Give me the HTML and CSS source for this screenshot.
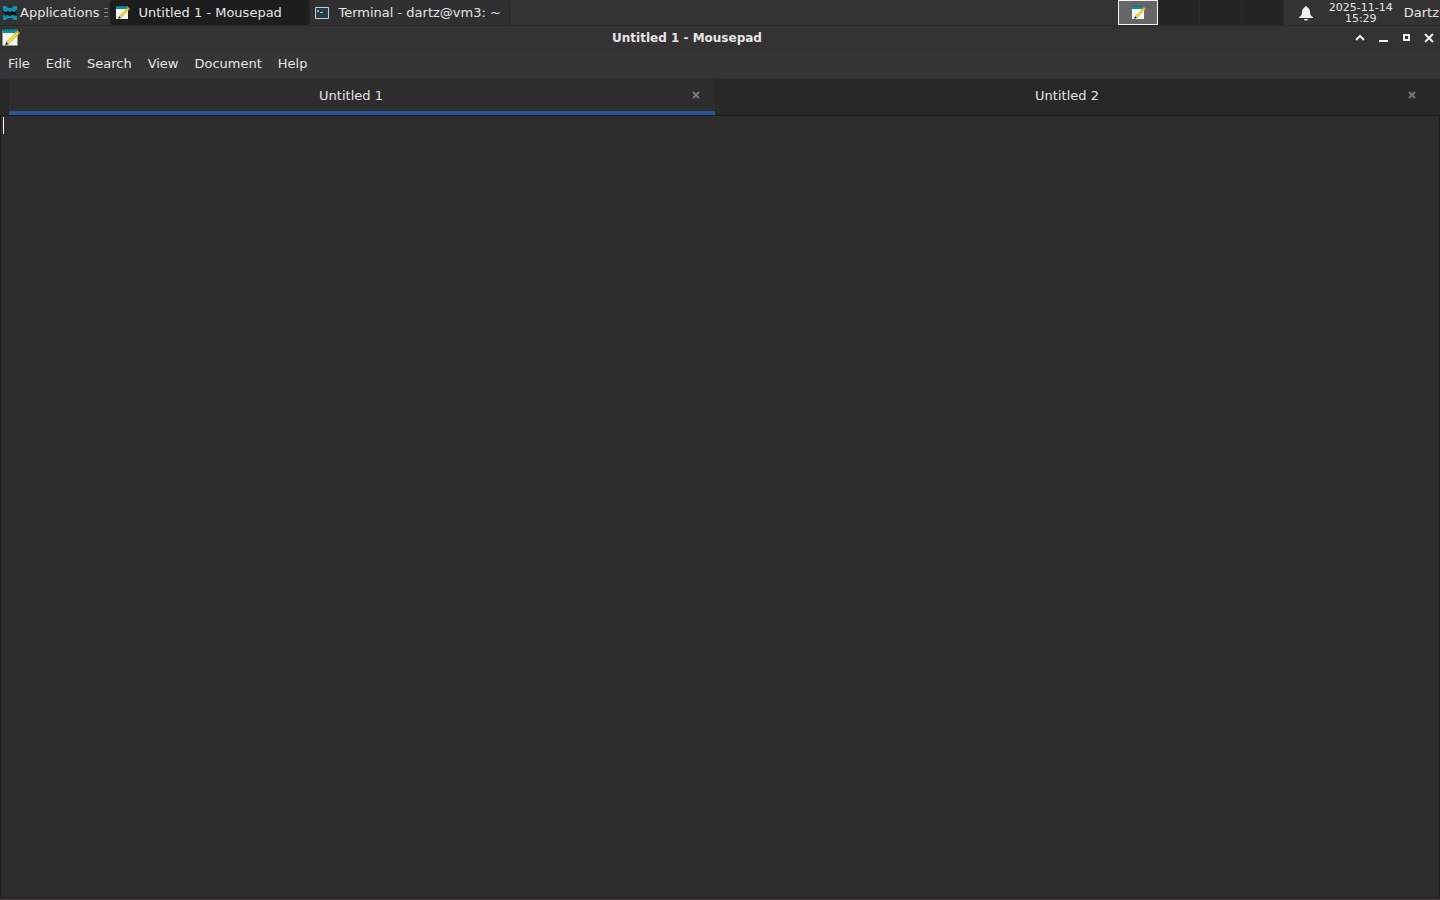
FILE: index.html
```html
<!DOCTYPE html>
<html lang="en">
    <head>
        <meta charset="utf-8">
        <title>Untitled 1 - Mousepad</title>
        <meta name="viewport" content="width=device-width, initial-scale=1">
        <link rel="stylesheet" href="styles.css">
    </head>

    <body>
        <!-- icon shared by the taskbar, pager and title bar -->
        <svg class="defs" width="0" height="0" aria-hidden="true">
            <symbol id="notepad" viewBox="0 0 16 16">
                <path d="M2 2h12v12H2z" fill="#f6f6f2"/>
                <path d="M2 1h12v3H2z" fill="#138c9c"/>
                <path d="M3 1v1M5 1v1M7 1v1M9 1v1M11 1v1" stroke="#0a5964"/>
                <path d="M5 11L13 3l2 2-8 8z" fill="#dfc52e"/>
                <path d="M6 12l8-8" stroke="#f3e36a"/>
                <path d="M5 11l2 2-3 1z" fill="#3a3524"/>
                <path d="M13 3l1-1 2 2-1 1z" fill="#d8a93a"/>
            </symbol>
        </svg>

        <header class="panel">
            <button class="apps">
                <svg width="18" height="18" viewBox="0 0 18 18" aria-hidden="true">
                    <path d="M2 2h3l2 2h4l2-2h3v4l-2 3 2 3v4h-3l-2-2H7l-2 2H2v-4l2-3-2-3z" fill="#1591ab"/>
                    <path d="M1 7l4 1 2-1 2 1 2-1 2 1 3-2-1 4 1 2-4-1-3 1-3-1-3 1 1-2z" fill="#0c171c"/>
                </svg>
                Applications
            </button>
            <span class="handle"></span>
            <button class="task active">
                <svg width="16" height="16" aria-hidden="true"><use href="#notepad"/></svg>
                Untitled 1 - Mousepad
            </button>
            <button class="task">
                <svg width="16" height="16" viewBox="0 0 16 16" aria-hidden="true">
                    <path d="M1.500 2.500h13v11h-13z" fill="#263a48" stroke="#c3d3dc"/>
                    <path d="M3 5l2 1-2 1M6 7.500h3" fill="none" stroke="#b5c6d0"/>
                </svg>
                Terminal - dartz@vm3: ~
            </button>

            <div class="pager">
                <button class="desk current" aria-label="Workspace 1">
                    <svg width="16" height="16" aria-hidden="true"><use href="#notepad"/></svg>
                </button>
                <button class="desk" aria-label="Workspace 2"></button>
                <button class="desk" aria-label="Workspace 3"></button>
                <button class="desk" aria-label="Workspace 4"></button>
            </div>
            <button class="bell" aria-label="Notifications">
                <svg width="16" height="16" viewBox="0 0 16 16" aria-hidden="true">
                    <path d="M8 1c1 0 1 1 1 1 2 1 3 3 3 5 0 3 1 4 3 5v1H1v-1c2-1 3-2 3-5 0-2 1-4 3-5 0 0 0-1 1-1zM6 14h4c0 2-4 2-4 0z" fill="#f0f0f0"/>
                </svg>
            </button>
            <button class="clock"><span>2025-11-14</span><span>15:29</span></button>
            <button class="user">Dartz</button>
        </header>

        <main class="window">
            <div class="titlebar">
                <svg width="20" height="20" aria-hidden="true"><use href="#notepad"/></svg>
                <h1>Untitled 1 - Mousepad</h1>
                <div class="controls">
                    <button aria-label="Shade"><svg width="12" height="12" viewBox="0 0 12 12"><path d="M2 8l4-4 4 4"/></svg></button>
                    <button aria-label="Minimize"><svg width="12" height="12" viewBox="0 0 12 12"><path d="M2 9h9"/></svg></button>
                    <button aria-label="Maximize"><svg width="12" height="12" viewBox="0 0 12 12"><path d="M4 3h5v5H4z"/></svg></button>
                    <button aria-label="Close"><svg width="12" height="12" viewBox="0 0 12 12"><path d="M2 2l8 8M10 2l-8 8"/></svg></button>
                </div>
            </div>

            <nav class="menubar">
                <button>File</button>
                <button>Edit</button>
                <button>Search</button>
                <button>View</button>
                <button>Document</button>
                <button>Help</button>
            </nav>

            <div class="tabs">
                <div class="tab active">
                    <button class="name">Untitled 1</button>
                    <button class="close" aria-label="Close Untitled 1"><svg width="10" height="10" viewBox="0 0 10 10"><path d="M2 2l6 6M8 2l-6 6"/></svg></button>
                </div>
                <div class="tab">
                    <button class="name">Untitled 2</button>
                    <button class="close" aria-label="Close Untitled 2"><svg width="10" height="10" viewBox="0 0 10 10"><path d="M2 2l6 6M8 2l-6 6"/></svg></button>
                </div>
            </div>

            <div class="editor">
                <textarea aria-label="Document text" spellcheck="false"></textarea>
                <span class="caret"></span>
            </div>
        </main>
    </body>
</html>
```
FILE: styles.css
```css
* {
    box-sizing: border-box;
}

body {
    margin: 0;
    height: 100vh;
    display: flex;
    flex-direction: column;
    background: #353333;
    color: #e6e6e6;
    font-family: "DejaVu Sans", Verdana, sans-serif;
    font-size: 13px;
    overflow: hidden;
}

button {
    margin: 0;
    padding: 0;
    border: 0;
    background: none;
    color: inherit;
    font: inherit;
    white-space: nowrap;
}

svg {
    display: block;
    flex: none;
}

.defs {
    position: absolute;
}

/* top panel */
.panel {
    display: flex;
    height: 26px;
    background: #333;
    border-bottom: 1px solid #292929;
}

.apps {
    display: flex;
    align-items: center;
    gap: 1px;
    padding-left: 1px;
}

.handle {
    width: 4px;
    height: 9px;
    margin: 8px 2px 0 5px;
    background: repeating-linear-gradient(#858585 0 1px, transparent 1px 4px);
}

.task {
    display: flex;
    align-items: center;
    gap: 8px;
    width: 200px;
    padding-left: 4px;
    background: #303030;
    border-right: 1px solid #252525;
    border-radius: 3px;
}

.task.active {
    background: #1d1d1d;
}

.pager {
    display: flex;
    margin-left: auto;
}

.desk {
    display: flex;
    align-items: center;
    justify-content: center;
    width: 42px;
    background: #242424;
    border-right: 1px solid #2a2a2a;
}

.desk.current {
    width: 40px;
    background: #666;
    border: 1px solid #f4f4f4;
}

.bell {
    display: flex;
    align-items: center;
    justify-content: center;
    width: 44px;
}

.clock {
    display: flex;
    flex-direction: column;
    justify-content: center;
    width: 66px;
    font-size: 11px;
    line-height: 11px;
    text-align: center;
}

.user {
    padding: 0 1px 0 10px;
}

/* window frame */
.window {
    flex: 1;
    display: flex;
    flex-direction: column;
    min-height: 0;
    margin-bottom: 2px;
    background: #353535;
}

.titlebar {
    display: flex;
    align-items: center;
    height: 24px;
    padding: 0 5px 0 0;
    background: #333;
}

.titlebar h1 {
    flex: 1;
    margin: 0;
    font-size: 12px;
    text-align: center;
}

.controls {
    display: flex;
    gap: 11px;
}

.controls svg {
    fill: none;
    stroke: #f2f2f2;
    stroke-width: 2;
}

.menubar {
    display: flex;
    gap: 16px;
    height: 28px;
    padding: 0 8px 2px;
}

/* document tabs */
.tabs {
    display: flex;
    gap: 10px;
    height: 38px;
    padding: 0 9px;
    background: #282828;
    border-top: 1px solid #303030;
    border-bottom: 1px solid #1c1c1c;
}

.tab {
    flex: 1;
    display: flex;
    align-items: center;
    padding: 0 14px 4px 2px;
}

.tab.active {
    background: #2d2d2d;
    border-bottom: 4px solid #2a5595;
    padding-bottom: 0;
}

.name {
    flex: 1;
}

.close svg {
    fill: none;
    stroke: #777;
    stroke-width: 2;
}

.editor {
    flex: 1;
    position: relative;
    display: flex;
    background: #2d2d2d;
    border: 1px solid #1c1c1c;
    border-top: 0;
}

.editor textarea {
    flex: 1;
    padding: 2px;
    border: 0;
    outline: 0;
    resize: none;
    background: transparent;
    color: #e6e6e6;
    font-family: "DejaVu Sans Mono", monospace;
    font-size: 13px;
}

.caret {
    position: absolute;
    left: 2px;
    top: 1px;
    width: 1px;
    height: 17px;
    background: #fff;
}
```
